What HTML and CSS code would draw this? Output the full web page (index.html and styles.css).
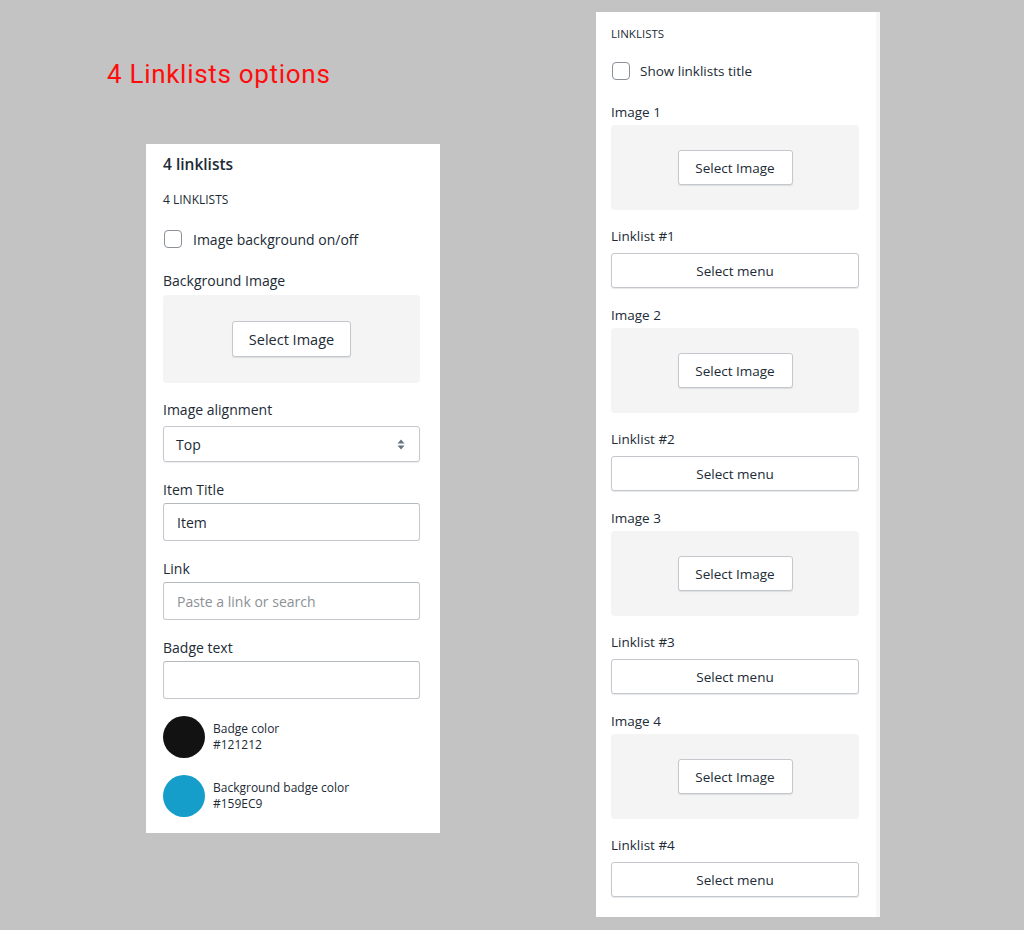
FILE: index.html
```html
<!DOCTYPE html>
<html>
<head>
<meta charset="utf-8">
<link rel="stylesheet" href="styles.css">
</head>
<body>
<div class="page">
  <div class="left-col">
    <h1 class="page-title">4 Linklists options</h1>
    <div class="panel panel-left">
      <div class="panel-heading">4 linklists</div>
      <div class="section-title st-left">4 LINKLISTS</div>
      <label class="check-row cr-left"><span class="checkbox"></span><span>Image background on/off</span></label>
      <div class="label l1">Background Image</div>
      <div class="image-box ib-left"><button class="btn btn-left">Select Image</button></div>
      <div class="label l2">Image alignment</div>
      <div class="select">
        <span>Top</span>
        <svg class="chev" width="8" height="11" viewBox="0 0 8 11"><path d="M4 0.5 L7.5 4.5 H0.5 Z M4 10.5 L7.5 6.5 H0.5 Z" fill="#637381"/></svg>
      </div>
      <div class="label l3">Item Title</div>
      <div class="input">Item</div>
      <div class="label l3">Link</div>
      <div class="input placeholder">Paste a link or search</div>
      <div class="label l3">Badge text</div>
      <div class="input"></div>
      <div class="color-row cr1">
        <span class="swatch sw-black"></span>
        <div class="color-text"><div>Badge color</div><div>#121212</div></div>
      </div>
      <div class="color-row cr2">
        <span class="swatch sw-blue"></span>
        <div class="color-text"><div>Background badge color</div><div>#159EC9</div></div>
      </div>
    </div>
  </div>
  <div class="panel panel-right">
    <div class="section-title st-right">LINKLISTS</div>
    <label class="check-row cr-right"><span class="checkbox"></span><span>Show linklists title</span></label>
    <div class="r-group">
      <div class="label rl-img">Image 1</div>
      <div class="image-box ib-right"><button class="btn btn-right">Select Image</button></div>
      <div class="label rl-list">Linklist #1</div>
      <button class="btn menu-btn">Select menu</button>
    </div>
    <div class="r-group">
      <div class="label rl-img">Image 2</div>
      <div class="image-box ib-right"><button class="btn btn-right">Select Image</button></div>
      <div class="label rl-list">Linklist #2</div>
      <button class="btn menu-btn">Select menu</button>
    </div>
    <div class="r-group">
      <div class="label rl-img">Image 3</div>
      <div class="image-box ib-right"><button class="btn btn-right">Select Image</button></div>
      <div class="label rl-list">Linklist #3</div>
      <button class="btn menu-btn">Select menu</button>
    </div>
    <div class="r-group">
      <div class="label rl-img">Image 4</div>
      <div class="image-box ib-right"><button class="btn btn-right">Select Image</button></div>
      <div class="label rl-list">Linklist #4</div>
      <button class="btn menu-btn">Select menu</button>
    </div>
  </div>
</div>
</body>
</html>
```

FILE: styles.css
```css
* { box-sizing: border-box; }
html, body { margin: 0; padding: 0; }
body {
  background: #c3c3c3;
  font-family: "Open Sans", "Noto Sans", sans-serif;
  color: #212b36;
  width: 1024px;
  height: 930px;
  overflow: hidden;
}
.page {
  display: flex;
  align-items: flex-start;
  padding-left: 107px;
}
.left-col {
  display: flex;
  flex-direction: column;
  width: 333px;
  padding-top: 58px;
}
.page-title {
  margin: 0;
  font-family: Roboto, "Liberation Sans", sans-serif;
  font-weight: 400;
  font-size: 26px;
  line-height: 32px;
  color: #ff0d0d;
  letter-spacing: 0.7px;
  white-space: nowrap;
}
.panel {
  background: #fff;
  display: flex;
  flex-direction: column;
}
.panel-left {
  margin-left: 39px;
  margin-top: 54px;
  width: 294px;
  padding: 10px 20px 16px 17px;
}
.panel-heading {
  font-size: 15.5px;
  font-weight: 600;
  line-height: 20px;
}
.section-title {
  font-size: 12px;
  line-height: 16px;
  text-transform: uppercase;
}
.st-left { margin-top: 18px; }
.check-row {
  display: flex;
  align-items: center;
  height: 18px;
  font-size: 13.5px;
}
.checkbox {
  width: 18px;
  height: 18px;
  border: 1px solid #8a9199;
  border-radius: 4px;
  background: #fff;
  flex: none;
}
.cr-left { margin-top: 22px; gap: 11px; font-size: 14px; }
.cr-left .checkbox { margin-left: 1px; }
.label {
  font-size: 13.5px;
  line-height: 20px;
}
.panel-left .label { font-size: 14px; }
.l1 { margin-top: 23px; }
.l2 { margin-top: 17px; }
.l3 { margin-top: 18px; }
.image-box {
  background: #f4f4f4;
  border-radius: 4px;
  display: flex;
  align-items: center;
  justify-content: center;
}
.ib-left { height: 88px; margin-top: 4px; }
.btn {
  font-family: inherit;
  color: #212b36;
  background: #fff;
  border: 1px solid #c4c8cc;
  border-radius: 3px;
  box-shadow: 0 1px 1px rgba(22, 29, 37, 0.1);
  padding: 0;
  cursor: pointer;
}
.btn-left {
  width: 119px;
  height: 36px;
  font-size: 14.5px;
}
.select {
  margin-top: 6px;
  height: 36px;
  border: 1px solid #c4c8cc;
  border-radius: 3px;
  box-shadow: 0 1px 1px rgba(22, 29, 37, 0.08);
  display: flex;
  align-items: center;
  justify-content: space-between;
  padding: 0 14px 0 12px;
  font-size: 14px;
}
.chev { display: block; }
.input {
  margin-top: 3px;
  height: 38px;
  border: 1px solid #c4c8cc;
  border-top-color: #b4b9be;
  border-radius: 3px;
  display: flex;
  align-items: center;
  padding: 0 13px;
  font-size: 14px;
}
.placeholder { color: #8c9196; }
.color-row {
  display: flex;
  align-items: center;
  gap: 8px;
}
.cr1 { margin-top: 17px; }
.cr2 { margin-top: 17px; }
.swatch {
  width: 42px;
  height: 42px;
  border-radius: 50%;
  flex: none;
}
.sw-black { background: #121212; }
.sw-blue { background: #159ec9; }
.color-text {
  font-size: 12px;
  line-height: 16px;
}

/* right panel */
.panel-right {
  margin-left: 156px;
  margin-top: 12px;
  width: 284px;
  padding: 14px 17px 20px 15px;
  border-right: 4px solid #f7f7f7;
}
.st-right { margin-top: 0; font-size: 11.5px; }
.cr-right { margin-top: 20px; gap: 10px; }
.cr-right .checkbox { margin-left: 1px; }
.r-group { display: flex; flex-direction: column; }
.rl-img { margin-top: 22px; }
.r-group + .r-group .rl-img { margin-top: 17px; }
.ib-right { height: 85px; margin-top: 3px; }
.btn-right {
  width: 115px;
  height: 35px;
  font-size: 13.5px;
}
.rl-list { margin-top: 16px; }
.menu-btn {
  margin-top: 7px;
  height: 35px;
  width: 100%;
  font-size: 13.5px;
}
```
